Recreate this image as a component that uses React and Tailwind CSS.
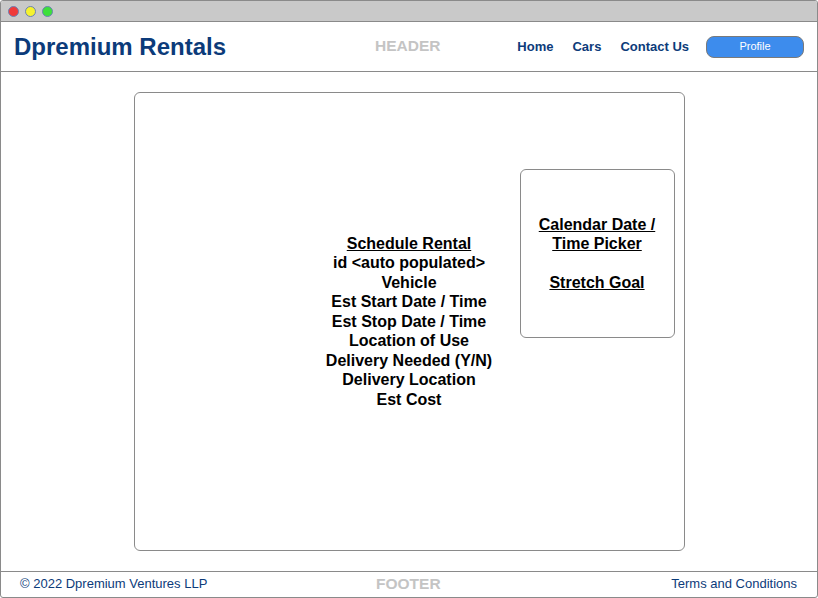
export default function App() {
  const lines = [
    "id <auto populated>",
    "Vehicle",
    "Est Start Date / Time",
    "Est Stop Date / Time",
    "Location of Use",
    "Delivery Needed (Y/N)",
    "Delivery Location",
    "Est Cost",
  ];
  return (
    <div
      className="w-[818px] h-[598px] bg-white"
      style={{ fontFamily: '"Liberation Sans", Arial, sans-serif' }}
    >
      <div className="w-full h-full flex flex-col border border-[#8a8a8a] rounded-[3px] overflow-hidden">
        {/* title bar */}
        <div className="h-[21px] bg-[#c9c9c9] border-b border-[#8a8a8a] flex items-center pl-[7px] gap-[6px] shrink-0">
          <span className="w-[11px] h-[11px] rounded-full bg-[#f03a3a] border border-[#6b82b5]" />
          <span className="w-[11px] h-[11px] rounded-full bg-[#f5f22e] border border-[#6b82b5]" />
          <span className="w-[11px] h-[11px] rounded-full bg-[#3ee03a] border border-[#6b82b5]" />
        </div>
        {/* header */}
        <div className="h-[50px] border-b border-[#8a8a8a] flex items-center shrink-0 relative">
          <div className="pl-[13px] text-[24px] font-bold text-[#0c3b7a] leading-none">Dpremium Rentals</div>
          <div className="absolute left-[374px] top-[16px] text-[15.5px] font-bold text-[#c4c4c4] leading-none">HEADER</div>
          <div className="ml-auto flex items-center gap-[19px] text-[13px] font-bold text-[#0c3b7a] pr-[13px]">
            <span className="ml-[-1px]">Home</span>
            <span>Cars</span>
            <span>Contact Us</span>
            <button className="w-[98px] h-[22px] rounded-[8px] bg-[#3d8ced] border border-[#7a7a7a] text-white text-[11px] font-normal leading-none ml-[-2px]">
              Profile
            </button>
          </div>
        </div>
        {/* main */}
        <div className="flex-1 flex justify-center items-start pt-[20px]">
          <div className="relative w-[551px] h-[459px] border border-[#8a8a8a] rounded-[6px] flex items-center justify-center">
            <div className="text-center text-[16px] font-bold text-black leading-[19.5px] mt-[0px]">
              <div className="underline">Schedule Rental</div>
              {lines.map((l) => (
                <div key={l}>{l}</div>
              ))}
            </div>
            <div className="absolute right-[9px] top-[76px] w-[155px] h-[169px] border border-[#8a8a8a] rounded-[6px] flex items-center justify-center">
              <div className="text-center text-[16px] font-bold text-black leading-[19.5px] underline mt-[0px]">
                <div>Calendar Date /</div>
                <div>Time Picker</div>
                <div className="h-[19px]" />
                <div>Stretch Goal</div>
              </div>
            </div>
          </div>
        </div>
        {/* footer */}
        <div className="h-[26px] border-t border-[#8a8a8a] flex items-center shrink-0 relative text-[13px] text-[#0c3b7a]">
          <div className="pl-[19px] mt-[-2px]">© 2022 Dpremium Ventures LLP</div>
          <div className="absolute left-[375px] top-[2px] text-[15.5px] font-bold text-[#c4c4c4] leading-[20px]">FOOTER</div>
          <div className="ml-auto pr-[20px] mt-[-2px]">Terms and Conditions</div>
        </div>
      </div>
    </div>
  );
}
